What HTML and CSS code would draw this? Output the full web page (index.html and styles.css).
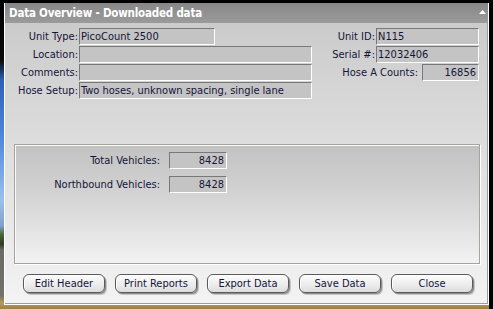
FILE: index.html
```html
<!DOCTYPE html>
<html lang="en">
<head>
    <meta charset="UTF-8">
    <title>Data Overview - Downloaded data</title>
    <link rel="stylesheet" href="styles.css">
</head>
<body>

    <div class="window">
        <div class="titlebar">
            <span class="title">Data Overview - Downloaded data</span>
            <svg class="rollup" width="7" height="4" viewBox="0 0 7 4"><polygon points="0,4 3.5,0 7,4" fill="#fff"/></svg>
        </div>

        <div class="client">
            <div class="header-info">
                <div class="info-left">
                    <span class="label">Unit Type:</span><div class="field short">PicoCount 2500</div>
                    <span class="label">Location:</span><div class="field long"></div>
                    <span class="label">Comments:</span><div class="field long"></div>
                    <span class="label">Hose Setup:</span><div class="field long">Two hoses, unknown spacing, single lane</div>
                </div>
                <div class="info-right">
                    <div class="row"><span class="label">Unit ID:</span><div class="field mid">N115</div></div>
                    <div class="row"><span class="label">Serial #:</span><div class="field mid">12032406</div></div>
                    <div class="row counts"><span class="label">Hose A Counts:</span><div class="field num">16856</div></div>
                </div>
            </div>

            <div class="totals">
                <span class="label">Total Vehicles:</span><div class="field num">8428</div>
                <span class="label">Northbound Vehicles:</span><div class="field num">8428</div>
            </div>

            <div class="buttons">
                <button>Edit Header</button>
                <button>Print Reports</button>
                <button>Export Data</button>
                <button>Save Data</button>
                <button>Close</button>
            </div>
        </div>
    </div>

</body>
</html>
```

FILE: styles.css
```css
body {
    margin: 0;
    height: 309px;
    overflow: hidden;
    font-family: "DejaVu Sans Condensed", "Liberation Sans", Arial, sans-serif;
    font-size: 11px;
    color: #14143a;
    background:
        linear-gradient(to right, transparent 489px, #000 489px),
        linear-gradient(to bottom, #000 0, #0a0a0a 60px, #2c62b8 80px, #4f8ade 140px, #9cc0ee 200px, #7fa0c8 226px, #4d6a38 234px, #2e3a22 244px, #6a6a66 250px, #75716a 296px, #b89a52 303px, #9a8048 309px);
}
.window {
    margin: 3px 0 0 4px;
    width: 485px;
    height: 302px;
    box-sizing: border-box;
    border: 1px solid #fff;
    border-top: none;
    display: flex;
    flex-direction: column;
}
.titlebar {
    height: 20px;
    flex: none;
    display: flex;
    align-items: center;
    justify-content: space-between;
    padding: 0 2px 0 4px;
    background: linear-gradient(to bottom, #878787, #9b9b9b);
}
.title {
    color: #fff;
    font-weight: bold;
    font-size: 11.5px;
    letter-spacing: -0.2px;
}
.rollup {
    margin-top: -3px;
}
.client {
    flex: 1;
    border-right: 1px solid #9c9c9c;
    border-bottom: 1px solid #9c9c9c;
    background: linear-gradient(to bottom, #cbcbcb, #dedede 45%, #f3f3f3);
}
.header-info {
    height: 121px;
    box-sizing: border-box;
    padding: 5px 8px 0 0;
    display: flex;
    justify-content: space-between;
    align-items: flex-start;
}
.info-left {
    display: grid;
    grid-template-columns: 73px auto;
    column-gap: 1px;
    row-gap: 1px;
    align-items: center;
}
.label {
    text-align: right;
    white-space: nowrap;
}
.field {
    height: 17px;
    box-sizing: border-box;
    border: 1px solid #fff;
    border-top-color: #787878;
    border-left-color: #787878;
    background: #c4c4c4;
    padding: 0 2px 0 1px;
    line-height: 15px;
    white-space: nowrap;
    overflow: hidden;
}
.short {
    width: 136px;
}
.long {
    width: 233px;
}
.mid {
    width: 103px;
}
.num {
    width: 57px;
    text-align: right;
}
.info-right {
    display: flex;
    flex-direction: column;
    align-items: flex-end;
    gap: 1px;
}
.row {
    display: flex;
    align-items: center;
    gap: 1px;
}
.counts {
    gap: 4px;
}
.totals {
    margin: 0 7px 0 9px;
    height: 120px;
    box-sizing: border-box;
    border: 1px solid #a4a49c;
    box-shadow: inset 1px 1px 0 #fafafa, 1px 1px 0 #fff;
    background: linear-gradient(to bottom, #c2c2c2, #d2d2d2 40%, #f2f2f2);
    padding-top: 7px;
    display: grid;
    grid-template-columns: 145px 58px;
    column-gap: 9px;
    row-gap: 7px;
    align-content: start;
    align-items: center;
}
.totals .num {
    width: 58px;
}
.buttons {
    display: flex;
    gap: 10px;
    padding: 10px 0 0 18px;
}
button {
    width: 82px;
    height: 19px;
    padding: 0;
    font-family: inherit;
    font-size: 11px;
    color: #14143a;
    border: 1px solid #5a5a5a;
    border-radius: 6px;
    background: linear-gradient(to bottom, #fdfdfd, #ebebeb 60%, #dcdcdc);
    box-shadow: inset 1px 1px 0 #fff, 1px 1px 0 #8c8c8c, 2px 2px 0 #c4c4c4;
}
```
